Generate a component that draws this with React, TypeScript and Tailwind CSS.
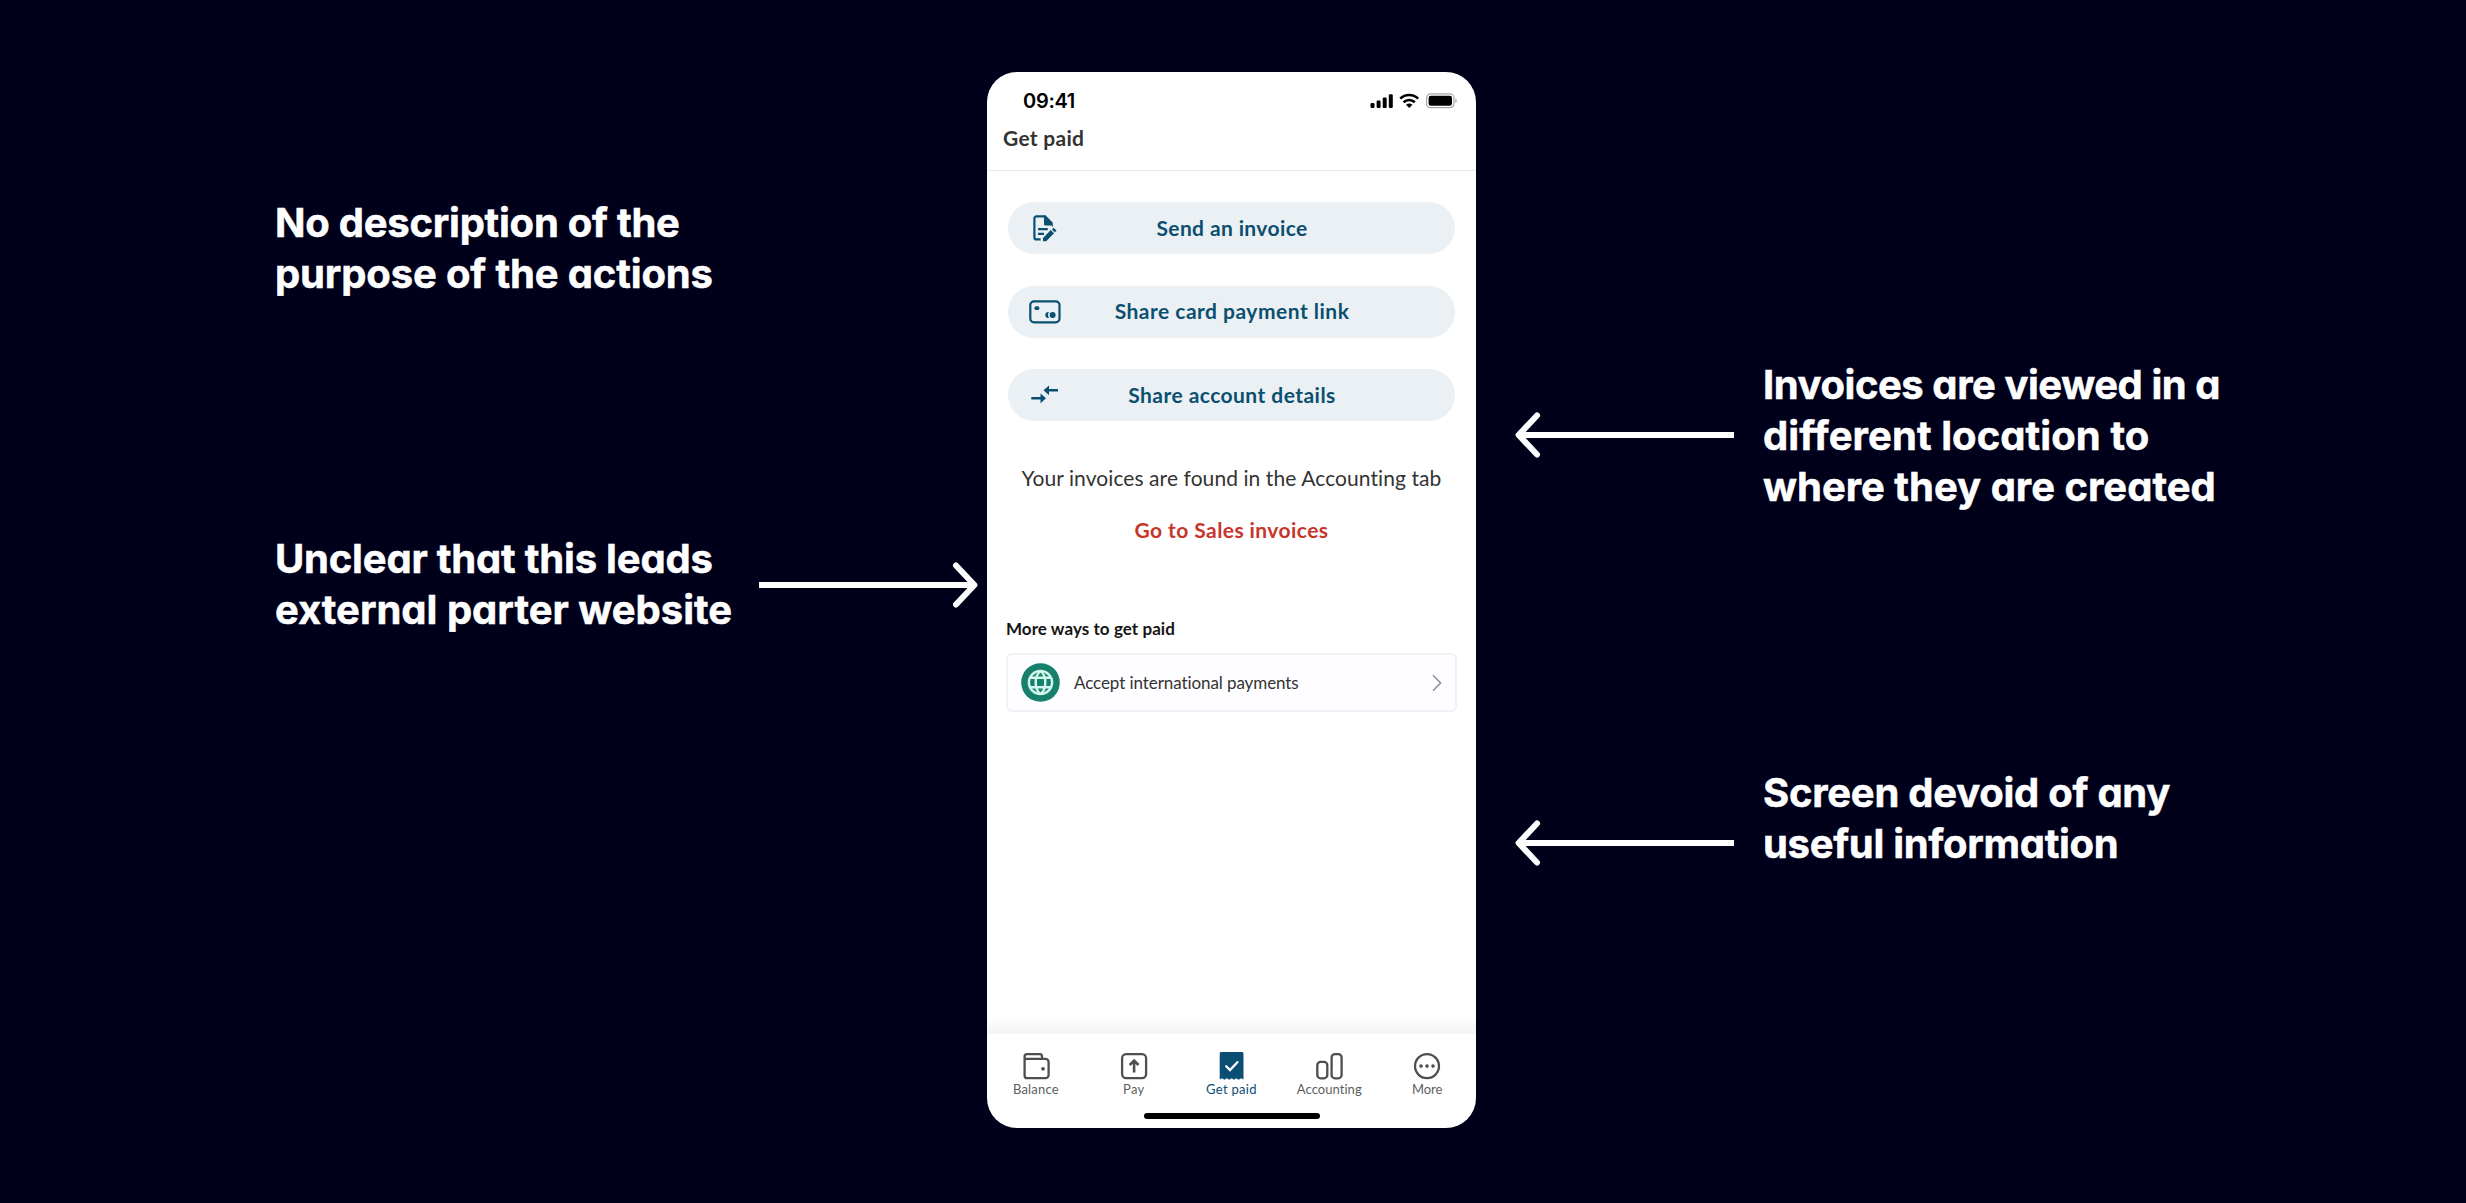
import type { ReactNode } from 'react';

// Status bar glyphs: signal, wifi, battery.
function StatusIcons() {
  return (
    <svg width="88" height="16" viewBox="0 0 88 16" fill="none">
      <g fill="#000">
        <rect x="0.5" y="10" width="4" height="5" rx="1.2" />
        <rect x="6.6" y="7.6" width="4" height="7.4" rx="1.2" />
        <rect x="12.7" y="4.6" width="4" height="10.4" rx="1.2" />
        <rect x="18.8" y="1.2" width="4" height="13.8" rx="1.2" />
        <path d="M39.2 15l-3.200-3.300a4.600 4.600 0 0 1 6.400 0z" />
      </g>
      <g stroke="#000" strokeWidth="2.7">
        <path d="M30.3 5.6a12.800 12.800 0 0 1 17.800 0" />
        <path d="M33.6 9.200a8.200 8.200 0 0 1 11.200 0" />
      </g>
      <rect x="56.6" y="0.9" width="27.4" height="13.8" rx="4" stroke="#a6a6a6" strokeWidth="1.2" />
      <rect x="58.6" y="2.8" width="23.4" height="10" rx="2.2" fill="#000" />
      <path d="M85.4 5.6c1.7.6 1.7 3.8 0 4.4z" fill="#a6a6a6" />
    </svg>
  );
}

function InvoiceIcon() {
  return (
    <svg width="26" height="28" viewBox="0 0 26 28" fill="none" stroke="#0b4f70">
      <path d="M8.6 25.4H4.4a2 2 0 0 1-2-2V4.4a2 2 0 0 1 2-2h8.4" strokeWidth="2.2" />
      <path d="M12 1.3h1.5l7.3 7.5v4.4l-1.2-1.7H13.3A1.3 1.3 0 0 1 12 10.2z" fill="#0b4f70" stroke="none" />
      <path d="M6 15.1h9.8M6 19.9h6" strokeWidth="2.2" />
      <path d="M11 27.2v-3.3l7.8-7.8 3.2 3.2-7.8 7.9z" fill="#0b4f70" stroke="none" />
      <path d="M20.8 14.6l2.9 2.9" strokeWidth="2.4" />
    </svg>
  );
}

function CardIcon() {
  return (
    <svg width="32" height="24" viewBox="0 0 32 24" fill="none">
      <rect x="1.3" y="1.3" width="29.2" height="21" rx="3.8" stroke="#0b4f70" strokeWidth="2.2" />
      <rect x="5.4" y="6.2" width="5" height="3.9" rx="1.9" fill="#0b4f70" />
      <circle cx="23.6" cy="15" r="3" fill="#0b4f70" />
      <path d="M20 12.1a3 3 0 1 0 0 5.8 5 5 0 0 1 0-5.8z" fill="#0b4f70" />
    </svg>
  );
}

function TransferIcon() {
  return (
    <svg width="28" height="20" viewBox="0 0 28 20" fill="#0b4f70">
      <path d="M0.3 12.1H9.5V8.4L15 13.3l-5.500 4.900v-3.700H0.300z" />
      <path d="M27 4.100H18V0.400L12.500 5.300 18 10.200V6.500h9z" />
    </svg>
  );
}

function GlobeIcon() {
  return (
    <svg width="39" height="39" viewBox="0 0 39 39" fill="none">
      <circle cx="19.5" cy="19.5" r="19.3" fill="#17806a" />
      <g stroke="#d3f7ee" strokeWidth="2.4">
        <circle cx="19.5" cy="19.5" r="11.6" />
        <path d="M19.5 7.9c-6.400 5-6.400 18.200 0 23.200M19.500 7.900c6.400 5 6.400 18.200 0 23.200" />
        <path d="M9.2 14.7h20.600M9.200 24.300h20.600" />
      </g>
    </svg>
  );
}

function TabIcon({ name }: { name: string }) {
  return (
    <svg width="28" height="28" viewBox="0 0 28 28" fill="none" stroke="#4b4f52" strokeWidth="2.3">
      {name === 'Balance' && (
        <>
          <path d="M20 6.8V4.4a2.200 2.200 0 0 0-2.200-2.200H5a2.400 2.400 0 0 0-2.400 2.400v18.800a2.800 2.800 0 0 0 2.800 2.800h18a3.200 3.200 0 0 0 3.200-3.200V10a3.200 3.200 0 0 0-3.200-3.200H2.600" />
          <circle cx="21" cy="16.8" r="1.9" fill="#4b4f52" stroke="none" />
        </>
      )}
      {name === 'Pay' && (
        <>
          <rect x="2.1" y="2.1" width="24" height="24" rx="4" />
          <path d="M14.1 20.6V9M9.700 13l4.400-4.400 4.400 4.400" strokeWidth="2.6" />
        </>
      )}
      {name === 'Get paid' && (
        <g transform="translate(1.6 -0.4)">
          <path
            d="M1.1 2.500A2.500 2.500 0 0 1 3.600 0h18.800a2.500 2.500 0 0 1 2.500 2.500V28l-2.400-1.300-2.400 1.500-2.400-1.500-2.300 1.500-2.400-1.500-2.400 1.500-2.400-1.500-2.400 1.500-2.400-1.500L1.100 28z"
            fill="#0a4e73"
            stroke="none"
          />
          <path d="M7.6 14.600l3.800 3.800 7.400-7.800" stroke="#fff" strokeWidth="2.3" strokeLinecap="round" />
        </g>
      )}
      {name === 'Accounting' && (
        <>
          <rect x="2.3" y="9.9" width="10" height="16.4" rx="3.4" />
          <rect x="16.6" y="2.1" width="10" height="24.2" rx="3.4" />
        </>
      )}
      {name === 'More' && (
        <>
          <circle cx="14" cy="14.1" r="12" />
          <g fill="#4b4f52" stroke="none">
            <circle cx="8" cy="14.1" r="1.8" />
            <circle cx="14" cy="14.1" r="1.8" />
            <circle cx="20" cy="14.1" r="1.8" />
          </g>
        </>
      )}
    </svg>
  );
}

function Arrow({ className }: { className?: string }) {
  return (
    <svg className={className} width="219" height="46" viewBox="0 0 219 46" fill="none" stroke="#fff" strokeWidth="6">
      <path d="M219 23H5" />
      <path d="M22 3.5L3.600 23 22 42.500" strokeLinecap="round" strokeLinejoin="round" />
    </svg>
  );
}

function Action({ icon, children }: { icon: ReactNode; children: ReactNode }) {
  return (
    <div className="grid h-[52px] grid-cols-[72px_1fr_72px] items-center rounded-full bg-[#ebf0f4]">
      <span className="flex justify-center pl-px">{icon}</span>
      <span className="pb-px pl-px text-center text-[21px] leading-7 font-bold text-[#0b4f70]">{children}</span>
    </div>
  );
}

const tabs = [
  { name: 'Balance', label: 'tracking-[0.2px]' },
  { name: 'Pay', label: 'tracking-[0.2px]' },
  { name: 'Get paid', label: 'tracking-[0.3px] text-[#0a4e73]' },
  { name: 'Accounting', label: 'tracking-[0.05px]' },
  { name: 'More', label: 'tracking-[-0.1px]' },
];

function Phone() {
  return (
    <main className="mt-[72px] flex h-[1056px] w-[489px] shrink-0 flex-col overflow-hidden rounded-[30px] bg-white font-['Lato',sans-serif] font-normal text-[#333]">
      <header className="h-[99px] border-b border-[#e9e9e9] pt-[17px]">
        <div className="flex h-6 items-center justify-between pr-[18px] pl-[36px] text-black">
          <span className="font-['Inter',sans-serif] text-[20px] leading-6 font-semibold tracking-[-0.3px]">09:41</span>
          <StatusIcons />
        </div>
        <h1 className="mt-[11px] pl-4 text-[21px] leading-7 font-bold tracking-[0.28px]">Get paid</h1>
      </header>

      <div className="flex flex-col gap-[31.5px] px-[21px] pt-[31px]">
        <Action icon={<InvoiceIcon />}>
          <span className="tracking-[0.38px]">Send an invoice</span>
        </Action>
        <Action icon={<CardIcon />}>
          <span className="tracking-[0.49px]">Share card payment link</span>
        </Action>
        <Action icon={<TransferIcon />}>
          <span className="tracking-[0.45px]">Share account details</span>
        </Action>
      </div>

      <p className="mt-[43px] text-center text-[21px] leading-7 tracking-[0.08px]">
        Your invoices are found in the Accounting tab
      </p>
      <a className="mt-6 text-center text-[21px] leading-7 font-bold tracking-[0.42px] text-[#c8352b]">Go to Sales invoices</a>

      <section className="mt-[73px] px-[19px]">
        <h2 className="text-[17px] leading-6 font-bold tracking-[0.07px] text-[#151515]">More ways to get paid</h2>
        <div className="mt-3 flex h-[59px] items-center rounded-md border-2 border-[#f2f1f4] bg-[#fefdff] pr-[13px] pl-[13px]">
          <GlobeIcon />
          <span className="ml-[14px] flex-1 text-[17px] leading-6 tracking-[-0.08px]">Accept international payments</span>
          <svg width="10" height="18" viewBox="0 0 10 18" fill="none" stroke="#8d8d91" strokeWidth="1.5">
            <path d="M1 1.2L8.600 9 1 16.800" />
          </svg>
        </div>
      </section>

      <div className="mt-auto h-[18px] shrink-0 bg-linear-to-b from-white to-[#f4f4f4]" />
      <nav className="h-[94.5px] shrink-0 pt-[18px]">
        <div className="grid grid-cols-5">
          {tabs.map((tab) => (
            <div key={tab.name} className="flex flex-col items-center text-[#5c5f61]">
              <TabIcon name={tab.name} />
              <span className={`mt-px text-[13px] leading-4 ${tab.label}`}>{tab.name}</span>
            </div>
          ))}
        </div>
        <div className="mx-auto mt-4 h-[6.5px] w-[176px] rounded-full bg-black" />
      </nav>
    </main>
  );
}

export default function App() {
  return (
    <div className="flex h-[1203px] w-[2466px] overflow-hidden bg-[#00001b] font-['Inter',sans-serif] text-[40px] leading-[51px] font-bold whitespace-nowrap text-white [font-feature-settings:'cv11']">
      <aside className="w-[987px] shrink-0 pt-[197px] pl-[275px] [-webkit-text-stroke:0.5px_white]">
        <p>
          <span className="block tracking-[-0.25px]">No description of the</span>
          <span className="block tracking-[-0.15px]">purpose of the actions</span>
        </p>
        <div className="mt-[233.5px] flex items-center">
          <p className="w-[484px]">
            <span className="block tracking-[-0.2px]">Unclear that this leads</span>
            <span className="block">external parter website</span>
          </p>
          <Arrow className="mt-[3px] rotate-180" />
        </div>
      </aside>

      <Phone />

      <aside className="pt-[359px] pl-[39px] [-webkit-text-stroke:0.5px_white]">
        <div className="flex items-center gap-[29px]">
          <Arrow className="mb-px" />
          <p>
            <span className="block tracking-[-0.44px]">Invoices are viewed in a</span>
            <span className="block tracking-[0.08px]">different location to</span>
            <span className="block">where they are created</span>
          </p>
        </div>
        <div className="mt-[255px] flex items-center gap-[29px]">
          <Arrow className="mt-[50px]" />
          <p>
            <span className="block tracking-[-0.25px]">Screen devoid of any</span>
            <span className="block tracking-[-0.3px]">useful information</span>
          </p>
        </div>
      </aside>
    </div>
  );
}
